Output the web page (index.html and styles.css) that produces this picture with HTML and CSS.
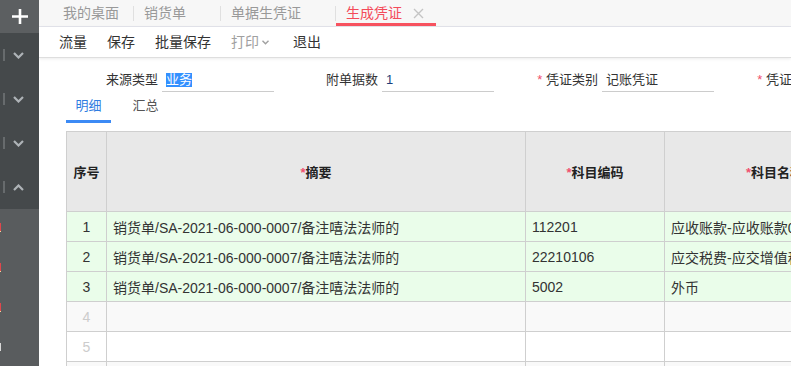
FILE: index.html
```html
<!DOCTYPE html>
<html lang="zh-CN">
<head>
  <meta charset="UTF-8" />
  <title>生成凭证</title>
  <link rel="stylesheet" href="styles.css">
</head>
<body>
<div class="app">
  <aside class="side">
    <div class="side-top">
      <svg width="18" height="17" viewBox="0 0 18 17"><path d="M9 1v15M1 8.5h16" stroke="#fff" stroke-width="2.6" fill="none"/></svg>
    </div>
    <ul class="side-menu">
      <li><span class="bar"></span><svg width="11" height="7" viewBox="0 0 11 7"><path d="M1 1l4.5 4.5L10 1" stroke="#aeb3b7" stroke-width="2.2" fill="none"/></svg></li>
      <li><span class="bar"></span><svg width="11" height="7" viewBox="0 0 11 7"><path d="M1 1l4.5 4.5L10 1" stroke="#aeb3b7" stroke-width="2.2" fill="none"/></svg></li>
      <li><span class="bar"></span><svg width="11" height="7" viewBox="0 0 11 7"><path d="M1 1l4.5 4.5L10 1" stroke="#aeb3b7" stroke-width="2.2" fill="none"/></svg></li>
      <li><span class="bar"></span><svg width="11" height="7" viewBox="0 0 11 7"><path d="M1 6l4.5-4.5L10 6" stroke="#aeb3b7" stroke-width="2.2" fill="none"/></svg></li>
    </ul>
    <div class="side-rest">
      <span class="mark red"></span>
      <span class="mark red"></span>
      <span class="mark red"></span>
      <span class="mark pale"></span>
    </div>
  </aside>

  <main class="main">
    <div class="tabbar">
      <div class="tab first">我的桌面</div>
      <span class="sep"></span>
      <div class="tab">销货单<span class="close hidden">×</span></div>
      <span class="sep"></span>
      <div class="tab">单据生凭证<span class="close hidden">×</span></div>
      <span class="sep"></span>
      <div class="tab active">生成凭证<span class="close">
        <svg width="11" height="11" viewBox="0 0 11 11"><path d="M1 1l9 9M10 1l-9 9" stroke="#c4c4c4" stroke-width="1.4"/></svg>
      </span></div>
    </div>

    <div class="toolbar">
      <a>流量</a>
      <a>保存</a>
      <a>批量保存</a>
      <a class="disabled">打印<svg width="7" height="5" viewBox="0 0 7 5"><path d="M0.5 0.8l3 3 3-3" stroke="#a0a0a0" stroke-width="1.4" fill="none"/></svg></a>
      <a>退出</a>
    </div>

    <div class="form">
      <div class="field">
        <label>来源类型</label>
        <div class="input"><span class="selected">业务</span></div>
      </div>
      <div class="field">
        <label>附单据数</label>
        <div class="input value">1</div>
      </div>
      <div class="field">
        <label><i>*</i> 凭证类别</label>
        <div class="input">记账凭证</div>
      </div>
      <div class="field">
        <label><i>*</i> 凭证日期</label>
        <div class="input">2021-06-18</div>
      </div>
    </div>

    <div class="detail">
      <div class="subtabs">
        <span class="subtab on">明细</span>
        <span class="subtab">汇总</span>
      </div>

      <table class="grid">
        <colgroup>
          <col style="width:40px">
          <col style="width:419px">
          <col style="width:139px">
          <col style="width:220px">
          <col style="width:160px">
        </colgroup>
        <thead>
          <tr>
            <th>序号</th>
            <th><i>*</i>摘要</th>
            <th><i>*</i>科目编码</th>
            <th><i>*</i>科目名称</th>
            <th>借方金额</th>
          </tr>
        </thead>
        <tbody>
          <tr class="filled">
            <td class="no">1</td>
            <td>销货单/SA-2021-06-000-0007/备注嘻法法师的</td>
            <td>112201</td>
            <td>应收账款-应收账款01</td>
            <td></td>
          </tr>
          <tr class="filled">
            <td class="no">2</td>
            <td>销货单/SA-2021-06-000-0007/备注嘻法法师的</td>
            <td>22210106</td>
            <td>应交税费-应交增值税</td>
            <td></td>
          </tr>
          <tr class="filled">
            <td class="no">3</td>
            <td>销货单/SA-2021-06-000-0007/备注嘻法法师的</td>
            <td>5002</td>
            <td>外币</td>
            <td></td>
          </tr>
          <tr class="empty odd">
            <td class="no">4</td><td></td><td></td><td></td><td></td>
          </tr>
          <tr class="empty">
            <td class="no">5</td><td></td><td></td><td></td><td></td>
          </tr>
          <tr class="empty odd">
            <td class="no">6</td><td></td><td></td><td></td><td></td>
          </tr>
        </tbody>
      </table>
    </div>
  </main>
</div>
</body>
</html>
```

FILE: styles.css
```css
body {
  margin: 0;
  padding: 0;
  font-family: "Liberation Sans", "Noto Sans CJK SC", sans-serif;
  font-size: 13px;
  color: #333;
  background: #fff;
}

.app {
  display: flex;
  width: 791px;
  height: 366px;
  overflow: hidden;
}

/* left menu */
.side {
  width: 39px;
  flex-shrink: 0;
  display: flex;
  flex-direction: column;
  background: #595c5e;
  overflow: hidden;
}

.side-top {
  height: 33px;
  flex-shrink: 0;
  background: #5c5f61;
  display: flex;
  align-items: center;
  justify-content: center;
}

.side-menu {
  list-style: none;
  margin: 0;
  padding: 0;
  flex-shrink: 0;
  background: #45494b;
}

.side-menu li {
  height: 44px;
  display: flex;
  align-items: center;
}

.side-menu .bar {
  width: 2px;
  height: 12px;
  margin-left: 3px;
  margin-right: 8px;
  background: #676b6d;
}

.side-rest {
  flex: 1;
  min-height: 0;
  display: flex;
  flex-direction: column;
  padding-top: 14px;
}

.mark {
  width: 1px;
  height: 8px;
  margin-bottom: 31px;
  flex-shrink: 0;
}

.mark.red {
  background: #e0474c;
  border-bottom: 1px solid #f3d9a0;
}

.mark.pale {
  background: #d8d8d8;
}

/* main column */
.main {
  flex: 1;
  min-width: 0;
  overflow: hidden;
  display: flex;
  flex-direction: column;
}

.tabbar {
  height: 26px;
  display: flex;
  align-items: center;
  padding-left: 13px;
  background: #f7f7f7;
  border-bottom: 1px solid #e3e4eb;
  font-size: 14px;
  color: #999;
  flex-shrink: 0;
}

.tab {
  height: 26px;
  line-height: 26px;
  padding: 0 12px 0 10px;
  display: flex;
  align-items: center;
  white-space: nowrap;
}

.tab.first {
  padding: 0 14px 0 11px;
}

.tab.active {
  color: #f44a59;
  box-shadow: inset 0 -3px 0 #f7525f;
}

.close {
  width: 11px;
  margin-left: 11px;
  display: flex;
  align-items: center;
}

.close.hidden {
  visibility: hidden;
}

.sep {
  width: 1px;
  height: 15px;
  background: #e0e0e0;
}

.toolbar {
  height: 30px;
  line-height: 30px;
  padding-left: 20px;
  display: flex;
  gap: 20px;
  font-size: 14px;
  color: #333;
  border-bottom: 1px solid #dedede;
  box-shadow: 0 1px 3px rgba(0, 0, 0, 0.08);
  flex-shrink: 0;
}

.toolbar a {
  display: flex;
  align-items: center;
}

.toolbar .disabled {
  color: #a0a0a0;
  margin-right: 4px;
}

.toolbar .disabled svg {
  margin-left: 3px;
}

/* header form */
.form {
  display: flex;
  padding: 11px 0 0 19px;
  white-space: nowrap;
}

.field {
  display: flex;
  margin-right: 4px;
  flex-shrink: 0;
}

.field label {
  width: 100px;
  text-align: right;
  line-height: 22px;
  color: #333;
}

.field i, .grid i {
  font-style: normal;
  color: #f0506e;
}

.input {
  width: 108px;
  height: 22px;
  line-height: 22px;
  margin-left: 4px;
  padding-left: 4px;
  border-bottom: 1px solid #cccccc;
  color: #333;
}

.input.value {
  color: #1d3f7a;
}

.selected {
  display: inline-block;
  line-height: 14px;
  background: #3390ff;
  color: #fff;
}

/* detail */
.detail {
  padding-left: 27px;
}

.subtabs {
  display: flex;
  gap: 12px;
  margin-bottom: 8px;
}

.subtab {
  width: 45px;
  height: 31px;
  line-height: 28px;
  box-sizing: border-box;
  text-align: center;
  color: #555;
}

.subtab.on {
  color: #2f7de1;
  border-bottom: 3px solid #3c8af5;
}

.grid {
  border-collapse: collapse;
  table-layout: fixed;
  width: 978px;
}

.grid th, .grid td {
  border: 1px solid #cfcfcf;
  padding: 0;
  white-space: nowrap;
  overflow: hidden;
}

.grid th {
  height: 79px;
  background: #e8e8e8;
  color: #222;
  font-weight: bold;
  text-align: center;
}

.grid td {
  height: 29px;
  padding-left: 6px;
  font-size: 14px;
  color: #333;
}

.grid td.no {
  padding-left: 0;
  text-align: center;
}

.grid tr.filled td {
  background: #eafdea;
}

.grid tr.empty td.no {
  color: #cccccc;
}

.grid tr.odd td {
  background: #f9f9f9;
}
```
